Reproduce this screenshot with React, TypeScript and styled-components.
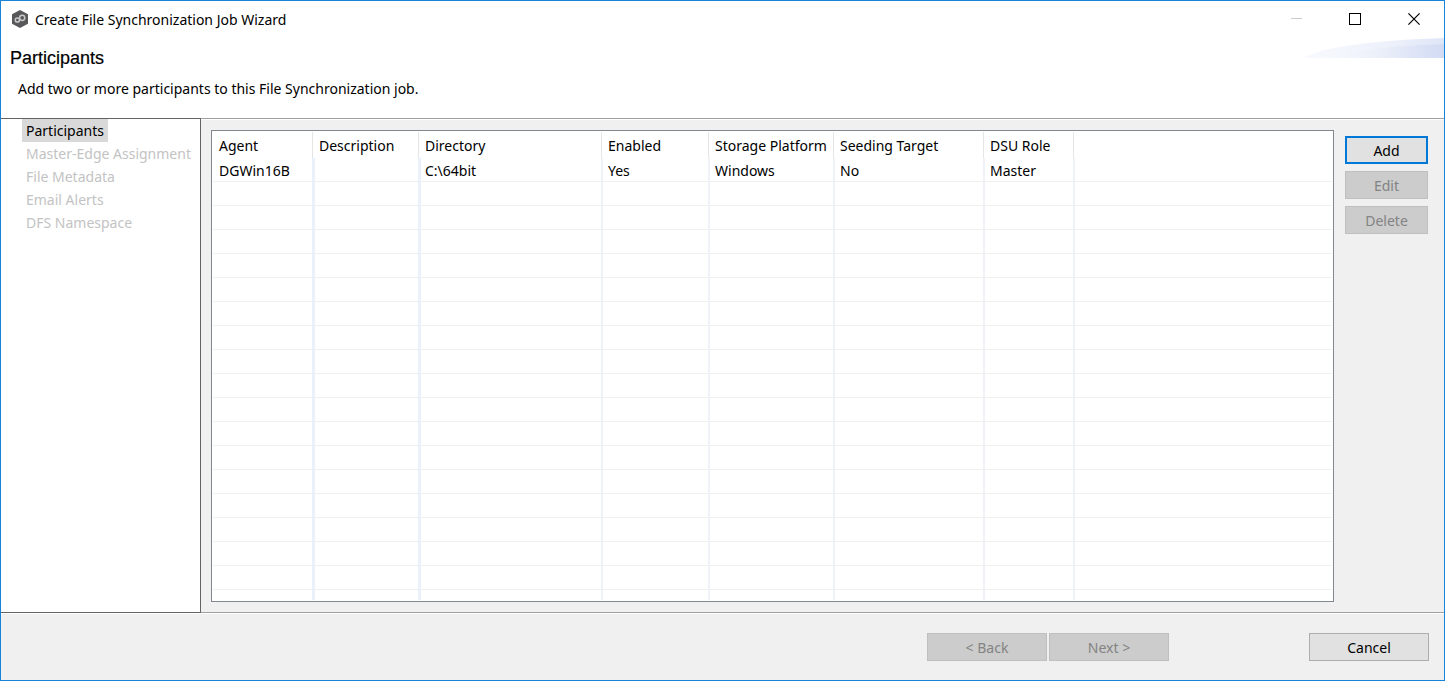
import React from 'react';
import styled, { createGlobalStyle } from 'styled-components';

const GlobalStyle = createGlobalStyle`
  *, *::before, *::after { box-sizing: border-box; }
  html, body, #root { height: 100%; }
  body {
    margin: 0;
    background: #f0f0f0;
    color: #000;
    font-family: "Noto Sans", "Open Sans", sans-serif;
    font-size: 14px;
    line-height: 20px;
  }
`;

const Window = styled.main`
  display: flex;
  flex-direction: column;
  min-height: 100%;
  border: 1px solid #1883d7;
  background: #f0f0f0;
`;

const TitleBar = styled.header`
  display: flex;
  align-items: center;
  height: 37px;
  padding: 0 1px 0 11px;
  background: #fff;
`;

const WindowTitle = styled.span`
  flex: 1;
  padding-left: 7px;
`;

const CaptionButton = styled.button`
  display: grid;
  place-items: center;
  width: 59px;
  height: 36px;
  margin-bottom: 1px;
  padding: 0;
  border: 0;
  background: none;
  color: #000;
  &:disabled { color: #ccc; }
`;

const Banner = styled.section`
  position: relative;
  height: 80px;
  padding: 10px 9px 0;
  background: #fff;
`;

const BannerTitle = styled.h1`
  margin: 0;
  font: 400 18px/21px "Liberation Sans", Arial, sans-serif;
  -webkit-text-stroke: 0.2px #000;
`;

const BannerText = styled.p`
  margin: 10px 0 0;
  padding-left: 8px;
`;

const Swoosh = styled.svg`
  position: absolute;
  top: 0;
  right: 0;
`;

const Body = styled.div`
  display: flex;
  flex: 1;
`;

const Steps = styled.nav`
  width: 200px;
  flex: none;
  padding-left: 21px;
  border: solid #646464;
  border-width: 1px 1px 1px 0;
  background: #fff;
`;

const StepList = styled.ol`
  margin: 0;
  padding: 0;
  list-style: none;
`;

const Step = styled.li<{ $active?: boolean }>`
  width: fit-content;
  height: 23px;
  padding: 0 4px;
  line-height: 23px;
  white-space: nowrap;
  color: ${(p) => (p.$active ? '#000' : '#c3c3c3')};
  background: ${(p) => (p.$active ? '#d9d9d9' : 'transparent')};
`;

const Content = styled.div`
  display: flex;
  flex: 1;
  gap: 11px;
  padding: 10px 16px 10px 10px;
  border-top: 1px solid #a0a0a0;
  border-bottom: 1px solid #a0a0a0;
  box-shadow: inset 0 1px #fff;
`;

const GridFrame = styled.div`
  display: flex;
  flex: 1;
  margin-top: 1px;
  padding: 1px;
  border: 1px solid #828790;
  background: #fff;
`;

const Grid = styled.table`
  width: 100%;
  height: 100%;
  table-layout: fixed;
  border-collapse: separate;
  border-spacing: 0;
`;

const HeadCell = styled.th`
  height: 26px;
  padding: 2px 0 0 6px;
  border-left: 1px solid #e5e5e5;
  font-weight: 400;
  text-align: left;
  white-space: nowrap;
  &:first-child { border-left: 0; }
`;

const Cell = styled.td<{ $wide?: boolean }>`
  height: 24px;
  padding: 2px 0 0 ${(p) => (p.$wide ? 4 : 5)}px;
  border-left: ${(p) => (p.$wide ? '3px solid #eaf1fb' : '2px solid #eff2f7')};
  border-bottom: 1px solid #f0f0f0;
  line-height: 21px;
  white-space: nowrap;
  &:first-child { padding-left: 6px; border-left: 0; }
  tr:last-child > & { height: auto; border-bottom: 0; }
`;

const Actions = styled.div`
  display: flex;
  flex-direction: column;
  gap: 7px;
  width: 83px;
  padding-top: 7px;
`;

const Footer = styled.footer`
  display: flex;
  justify-content: flex-end;
  gap: 2px;
  height: 67px;
  padding: 19px 15px 0;
  border-top: 1px solid #fff;
`;

const Button = styled.button<{ $wide?: boolean; $primary?: boolean; $apart?: boolean }>`
  width: ${(p) => (p.$wide ? '120px' : '100%')};
  height: 28px;
  margin-left: ${(p) => (p.$apart ? 138 : 0)}px;
  padding: 2px 0 0;
  border: ${(p) => (p.$primary ? '2px solid #0078d7' : '1px solid #adadad')};
  background: #e1e1e1;
  color: #000;
  font: inherit;
  &:disabled {
    border-color: #bfbfbf;
    background: #ccc;
    color: #838383;
  }
`;

const steps = ['Participants', 'Master-Edge Assignment', 'File Metadata', 'Email Alerts', 'DFS Namespace'];

const columns = [
  { title: 'Agent', value: 'DGWin16B', width: 99 },
  { title: 'Description', value: '', width: 106 },
  { title: 'Directory', value: 'C:\\64bit', width: 183 },
  { title: 'Enabled', value: 'Yes', width: 107 },
  { title: 'Storage Platform', value: 'Windows', width: 125 },
  { title: 'Seeding Target', value: 'No', width: 150 },
  { title: 'DSU Role', value: 'Master', width: 90 },
];

const emptyRows = Array.from({ length: 18 }, (_, i) => i);

const AppIcon = () => (
  <svg width="16" height="20" viewBox="0 0 16 20" aria-hidden="true">
    <path d="M8 0 16 4.3v9.4L8 18 0 13.7V4.3Z" fill="#58585a" />
    <g fill="none" stroke="#c8c8c8" strokeWidth="1.5">
      <circle cx="5.4" cy="10" r="2.1" />
      <circle cx="10.2" cy="7.8" r="2.6" />
    </g>
  </svg>
);

export default function App() {
  return (
    <>
      <GlobalStyle />
      <Window>
        <TitleBar>
          <AppIcon />
          <WindowTitle>Create File Synchronization Job Wizard</WindowTitle>
          <CaptionButton disabled aria-label="Minimize">
            <svg width="12" height="12"><path d="M1 5.5H12" stroke="currentColor" /></svg>
          </CaptionButton>
          <CaptionButton aria-label="Maximize">
            <svg width="12" height="12"><rect x="0.5" y="0.5" width="11" height="11" fill="none" stroke="currentColor" /></svg>
          </CaptionButton>
          <CaptionButton aria-label="Close">
            <svg width="12" height="12"><path d="M0.4 0.4 11.6 11.6M11.6 0.4 0.4 11.6" stroke="currentColor" strokeWidth="1.2" /></svg>
          </CaptionButton>
        </TitleBar>
        <Banner>
          <BannerTitle>Participants</BannerTitle>
          <BannerText>Add two or more participants to this File Synchronization job.</BannerText>
          <Swoosh width="141" height="20" viewBox="0 0 141 20" aria-hidden="true">
            <defs>
              <linearGradient id="sweep">
                <stop offset="0" stopColor="#f8fafe" />
                <stop offset="0.6" stopColor="#edf1fa" />
                <stop offset="1" stopColor="#dfe6f7" />
              </linearGradient>
              <linearGradient id="core">
                <stop offset="0" stopColor="#f8fafe" />
                <stop offset="0.5" stopColor="#ebeff9" />
                <stop offset="1" stopColor="#d2dbf4" />
              </linearGradient>
            </defs>
            <path d="M0 20C20 8 80 2 141 0V20Z" fill="url(#sweep)" />
            <path d="M16 20C50 12 90 8 141 6V20Z" fill="url(#core)" />
          </Swoosh>
        </Banner>
        <Body>
          <Steps aria-label="Wizard steps">
            <StepList>
              {steps.map((step, i) => (
                <Step key={step} $active={i === 0} aria-current={i === 0 ? 'step' : undefined}>{step}</Step>
              ))}
            </StepList>
          </Steps>
          <Content>
            <GridFrame>
              <Grid>
                <colgroup>
                  {columns.map((c) => <col key={c.title} width={c.width} />)}
                  <col />
                </colgroup>
                <thead>
                  <tr>
                    {columns.map((c) => <HeadCell key={c.title} scope="col">{c.title}</HeadCell>)}
                    <HeadCell as="td" />
                  </tr>
                </thead>
                <tbody>
                  <tr>
                    {columns.map((c, i) => <Cell key={c.title} $wide={i < 3}>{c.value}</Cell>)}
                    <Cell />
                  </tr>
                  {emptyRows.map((row) => (
                    <tr key={row}>
                      {columns.map((c, i) => <Cell key={c.title} $wide={i < 3} />)}
                      <Cell />
                    </tr>
                  ))}
                </tbody>
              </Grid>
            </GridFrame>
            <Actions>
              <Button $primary>Add</Button>
              <Button disabled>Edit</Button>
              <Button disabled>Delete</Button>
            </Actions>
          </Content>
        </Body>
        <Footer>
          <Button $wide disabled>&lt; Back</Button>
          <Button $wide disabled>Next &gt;</Button>
          <Button $wide $apart>Cancel</Button>
        </Footer>
      </Window>
    </>
  );
}
